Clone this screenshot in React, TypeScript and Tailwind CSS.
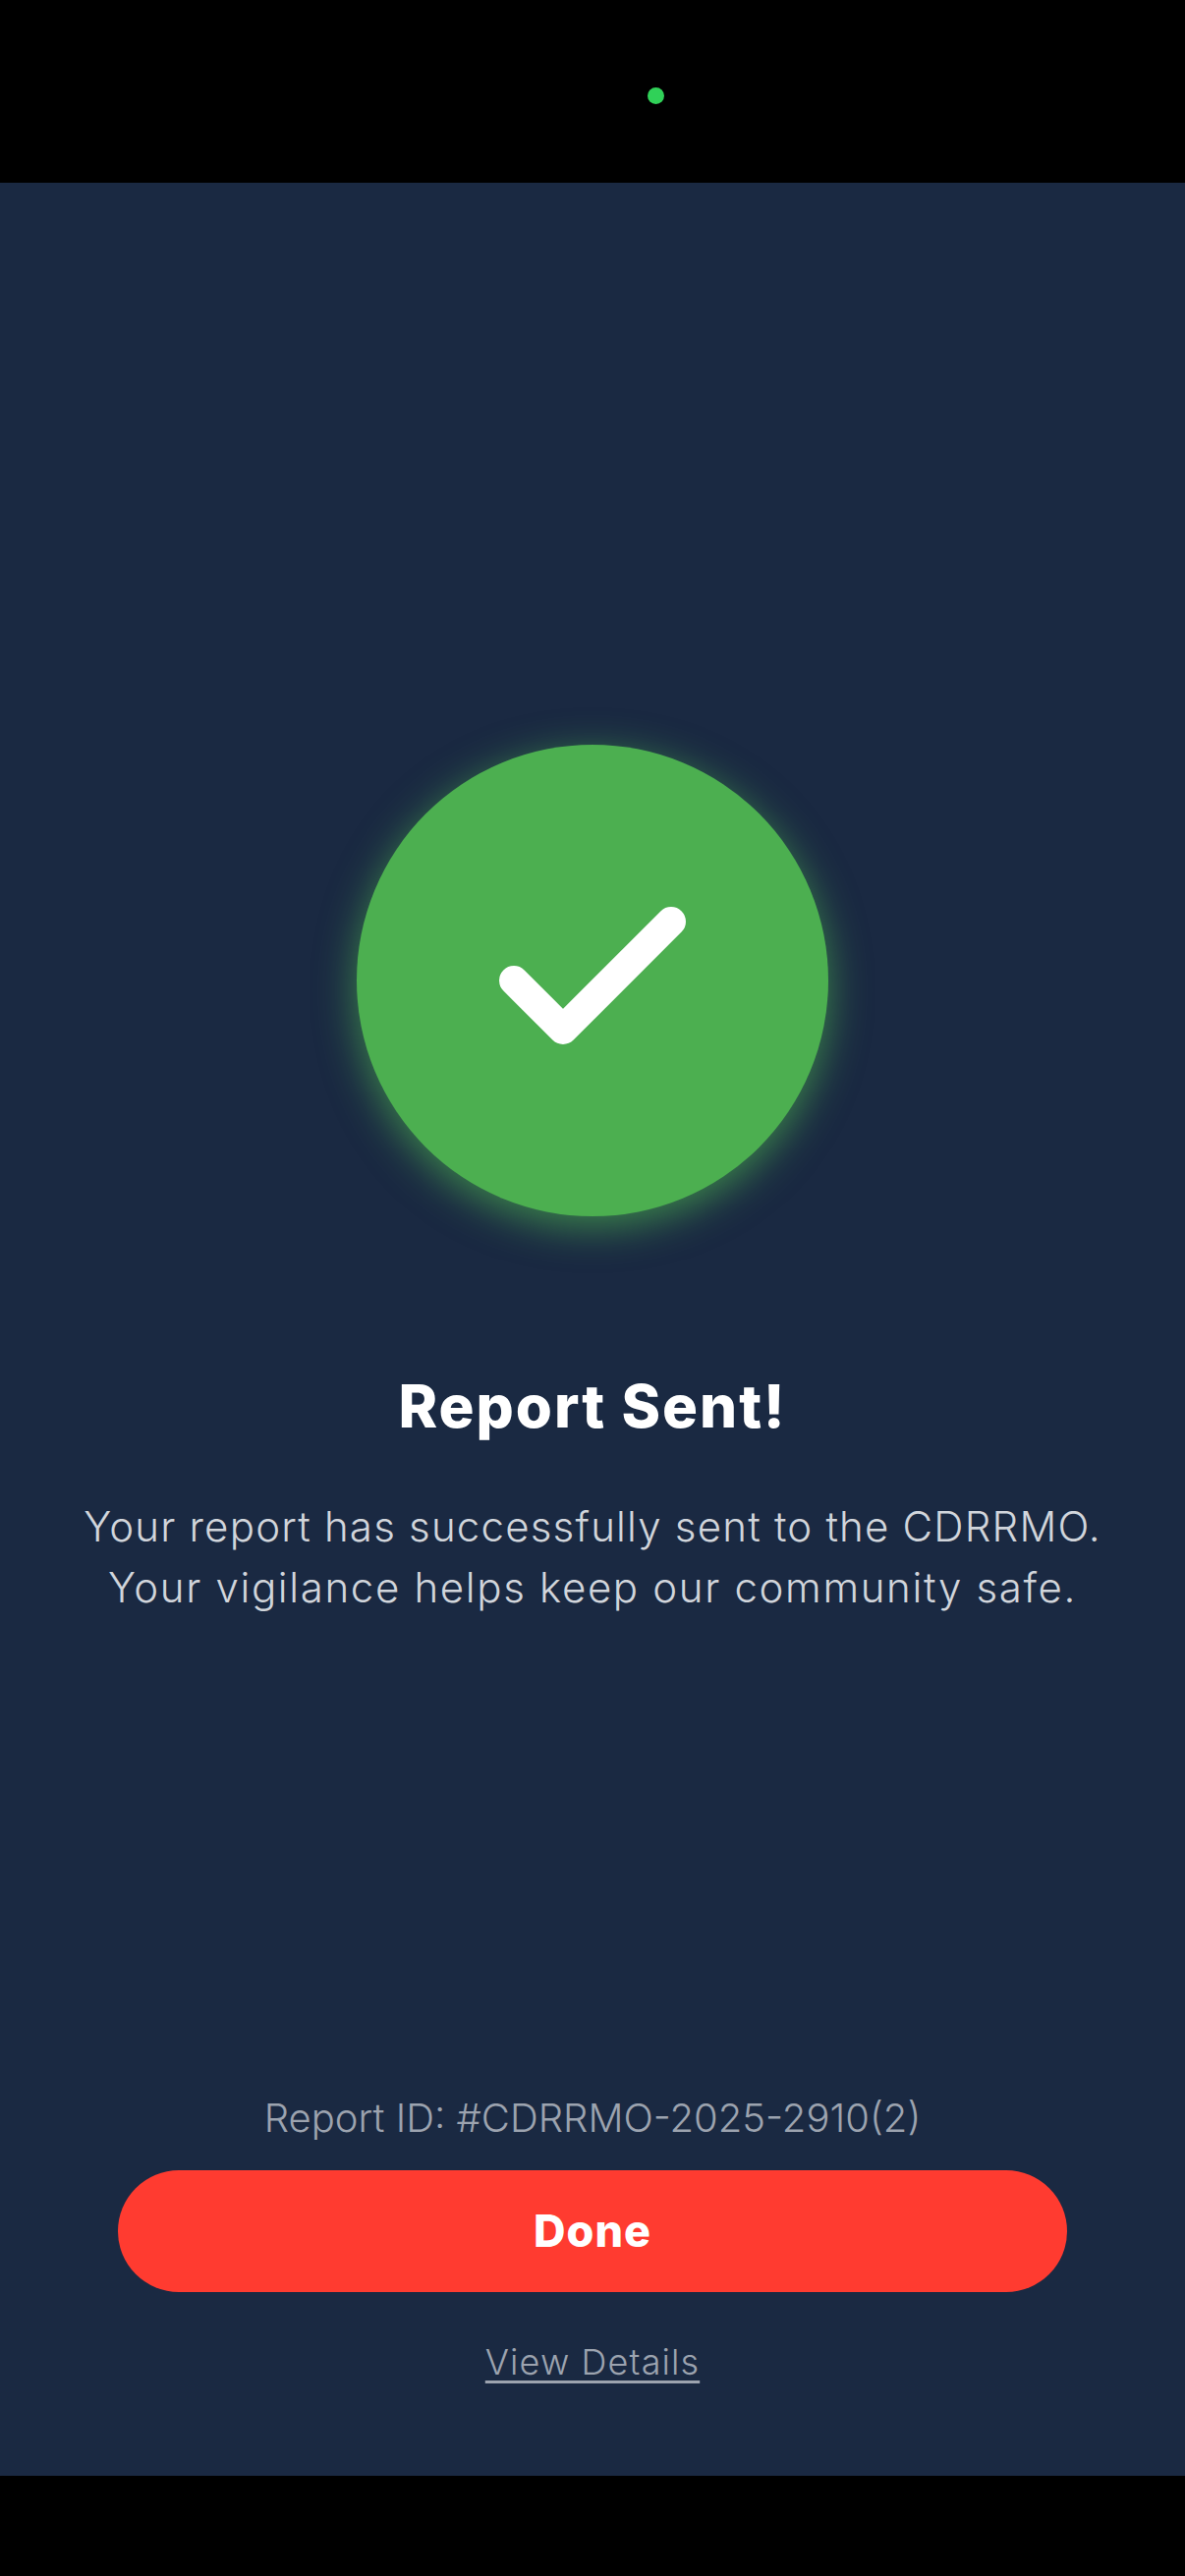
import { Check } from "lucide-react";

export default function App() {
  return (
    <div className="flex h-[2622px] w-[1206px] flex-col overflow-hidden bg-black font-['Inter',sans-serif]">
      <div className="flex h-[186px] shrink-0 items-start bg-black pl-[659px] pt-[89px]">
        <div className="h-[17px] w-[17px] rounded-full bg-[#30d158]" />
      </div>
      <main className="flex flex-1 flex-col items-center bg-[#1a2942]">
        <div className="mt-[572px] flex h-[480px] w-[480px] items-center justify-center rounded-full bg-[#4caf50] shadow-[0_10px_40px_rgba(76,175,80,0.7)]">
          <Check size={240} strokeWidth={3} strokeLinecap="round" strokeLinejoin="round" className="text-white" />
        </div>
        <h1 className="mt-[151px] text-center text-[60px] font-extrabold leading-[84px] tracking-[2px] text-white">Report Sent!</h1>
        <p className="mt-[50px] text-center text-[42px] font-light leading-[62px] tracking-[1.2px] text-[#d1d5db]">
          Your report has successfully sent to the CDRRMO.
          <br />
          <span className="tracking-[1.65px]">Your vigilance helps keep our community safe.</span>
        </p>
        <p className="mt-[484px] text-center text-[40px] font-[350] leading-[50px] text-[#9ca3af]">Report ID: #CDRRMO-2025-2910(2)</p>
        <button className="mt-[28px] flex h-[124px] w-[966px] items-center justify-center rounded-full bg-[#ff3b30] text-[45px] font-extrabold tracking-[1px] text-white">Done</button>
        <a className="mt-[46px] text-[36px] font-light leading-[50px] tracking-[1.1px] text-[#9ca3af] underline underline-offset-[6px]">View Details</a>
      </main>
      <div className="h-[102px] shrink-0 bg-black" />
    </div>
  );
}
